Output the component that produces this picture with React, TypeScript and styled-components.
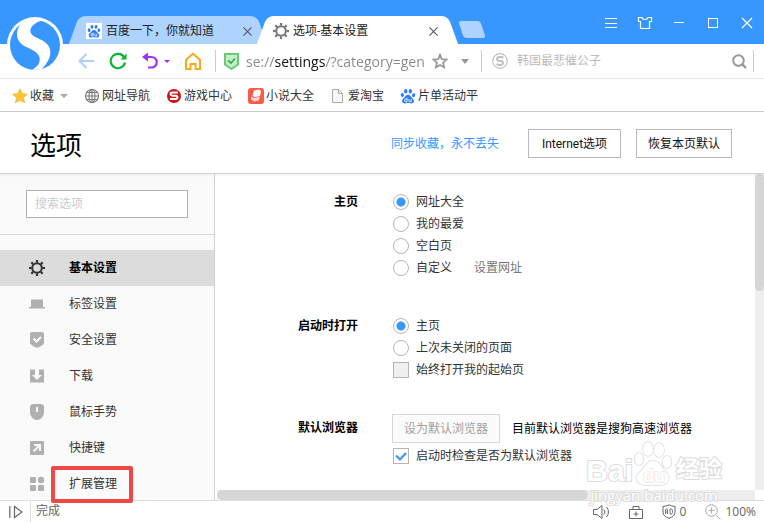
import React from "react";
import styled, { createGlobalStyle, css } from "styled-components";

const GlobalStyle = createGlobalStyle`
  *, *::before, *::after { box-sizing: border-box; }
  body {
    margin: 0;
    background: #fff;
    color: #333;
    font: 12px/22px Roboto, "Noto Sans CJK SC", sans-serif;
  }
  button, input { font: inherit; color: inherit; margin: 0; }
  button { padding: 0; border: 0; background: none; }
  a { color: inherit; text-decoration: none; }
  svg { display: block; flex: none; }
`;

const Window = styled.div`
  display: flex;
  flex-direction: column;
  height: 100vh;
  overflow: hidden;
`;

/* ---------- browser chrome ---------- */

const Chrome = styled.header`
  position: relative;
`;

const HomeLogo = styled.button`
  position: absolute;
  left: 7px;
  top: 17px;
  z-index: 2;
`;

const TitleBar = styled.div`
  display: flex;
  align-items: flex-end;
  height: 44px;
  padding-left: 74px;
  background: #3797ff;
`;

const Tab = styled.div<{ $active?: boolean }>`
  position: relative;
  z-index: ${(p) => (p.$active ? 1 : 0)};
  display: flex;
  align-items: center;
  flex: 0 1 ${(p) => (p.$active ? 191 : 188)}px;
  height: 28px;
  padding: 2px ${(p) => (p.$active ? 15 : 10)}px 0 ${(p) => (p.$active ? 11 : 12)}px;
  color: #222;

  &::before, &::after {
    content: "";
    position: absolute;
    z-index: -1;
    top: 0;
    bottom: 0;
    width: 60%;
    background: ${(p) => (p.$active ? "#fff" : "#aed3ff")};
  }
  &::before { left: 0; transform: skewX(-20deg); border-top-left-radius: 6px; }
  &::after { right: 0; transform: skewX(20deg); border-top-right-radius: 6px; }
`;

const TabStrip = styled.div`
  display: flex;
  flex: 1;
  isolation: isolate;
  & > div { isolation: isolate; }
`;

const TabTitle = styled.span`
  flex: 1;
  margin-left: 4px;
  white-space: nowrap;
`;

const NewTab = styled.button`
  width: 22px;
  height: 17px;
  margin: 5px 0 0 8px;
  background: #aed3ff;
  border-radius: 3px;
  transform: skewX(18deg);
`;

const WindowButtons = styled.div`
  display: flex;
  align-items: center;
  align-self: stretch;
  gap: 18px;
  padding: 2px 9px 0 0;
`;

const Toolbar = styled.div`
  display: flex;
  align-items: center;
  height: 35px;
  padding: 0 10px 0 78px;
  border-bottom: 1px solid #e3e3e3;
`;

const NavButtons = styled.div`
  display: flex;
  align-items: center;
  gap: 15px;
  margin-right: 14px;
`;

const UndoGroup = styled.div`
  display: flex;
  align-items: center;
  gap: 6px;
`;

const Divider = styled.span`
  width: 1px;
  height: 22px;
  background: #ccc;
`;

const AddressBox = styled.div`
  display: flex;
  align-items: center;
  flex: 1;
  gap: 7px;
  padding: 0 9px 0 8px;
`;

const AddressInput = styled.input`
  flex: 1;
  min-width: 0;
  height: 26px;
  padding: 0;
  border: 0;
  outline: 0;
  font-family: "Open Sans", sans-serif;
  font-size: 14px;
  color: transparent;
  background: linear-gradient(90deg, #888 28px, #111 28px, #111 80px, #888 80px);
  -webkit-background-clip: text;
  background-clip: text;
`;

const SearchBox = styled.div`
  display: flex;
  align-items: center;
  flex: none;
  width: 271px;
  gap: 9px;
  padding: 0 6px 0 10px;
`;

const PlainInput = styled.input`
  flex: 1;
  min-width: 0;
  padding: 0;
  border: 0;
  outline: 0;
  background: none;
  &::placeholder { color: #bbb; }
`;

const Bookmarks = styled.nav`
  display: flex;
  align-items: center;
  gap: 16px;
  height: 33px;
  padding: 1px 0 0 12px;
  border-bottom: 1px solid #ccc;
  white-space: nowrap;
`;

const Bookmark = styled.a`
  display: flex;
  align-items: center;
  gap: 2px;
`;

const BookmarkMenu = styled.button`
  display: flex;
  align-items: center;
  gap: 2px;
  & > svg:last-child { margin-left: 4px; }
`;

/* ---------- settings page ---------- */

const PageHeader = styled.div`
  display: flex;
  align-items: center;
  gap: 15px;
  height: 62px;
  padding: 2px 32px 0 30px;
  border-bottom: 1px solid #d3d3d3;
  box-shadow: 0 1px 3px #0000000f;
  z-index: 1;
`;

const PageTitle = styled.h1`
  flex: 1;
  margin: 0;
  padding-top: 4px;
  font-size: 26px;
  line-height: 40px;
  font-weight: 400;
  color: #000;
`;

const SyncLink = styled.a`
  margin-right: 14px;
  color: #3797ff;
`;

const BoxButton = styled.button<{ $muted?: boolean }>`
  height: 29px;
  padding: 0 ${(p) => (p.$muted ? 11 : 11)}px;
  border: 1px solid ${(p) => (p.$muted ? "#d8d8d8" : "#b9b9b9")};
  background: ${(p) => (p.$muted ? "#fbfbfb" : "#fff")};
  color: ${(p) => (p.$muted ? "#a0a0a0" : "#111")};
  line-height: 22px;
`;

const HeaderButton = styled(BoxButton)`
  min-width: 93px;
  &:last-child { min-width: 96px; }
`;

const Body = styled.div`
  display: flex;
  flex: 1;
  min-height: 0;
`;

const Sidebar = styled.aside`
  flex: none;
  width: 215px;
  background: #fafafa;
  border-right: 1px solid #d3d3d3;
`;

const SidebarSearch = styled.div`
  display: flex;
  padding: 16px 26px;
  border-bottom: 1px solid #d8d8d8;
`;

const SidebarInput = styled(PlainInput)`
  height: 28px;
  padding: 0 8px;
  border: 1px solid #b0b0b0;
  background: #fff;
  &::placeholder { color: #ccc; }
`;

const Menu = styled.nav`
  display: flex;
  flex-direction: column;
  padding-top: 15px;
`;

const MenuItem = styled.a<{ $active?: boolean }>`
  position: relative;
  display: flex;
  align-items: center;
  gap: 24px;
  height: 36px;
  padding-left: 29px;
  ${(p) => p.$active && css`
    background: #dcdcdc;
    color: #000;
    font-weight: 700;
  `}
`;

const Highlight = styled.span`
  position: absolute;
  z-index: 3;
  left: 51px;
  top: 0;
  width: 82px;
  height: 37px;
  border: 4px solid #f04747;
  border-radius: 2px;
`;

const Scroller = styled.div`
  flex: 1;
  min-width: 0;
  display: grid;
  grid-template-columns: 1fr 9px;
  grid-template-rows: 1fr 10px;
  padding-left: 2px;
`;

const Track = styled.div`
  background: #eee;
`;

const ThumbY = styled.div`
  height: 37%;
  background: #d6d6d6;
  border-radius: 5px;
`;

const ThumbX = styled.div`
  width: 69%;
  height: 100%;
  background: #d6d6d6;
  border-radius: 5px;
`;

const Content = styled.main`
  min-width: 0;
  min-height: 0;
  overflow: hidden;
  padding-top: 17px;
`;

const Section = styled.section<{ $gap?: number }>`
  display: grid;
  grid-template-columns: 141px 1fr;
  column-gap: 34px;
  margin-bottom: ${(p) => p.$gap ?? 0}px;
`;

const SectionTitle = styled.h2<{ $tall?: boolean }>`
  margin: 0;
  font-size: 12px;
  line-height: ${(p) => (p.$tall ? 29 : 22)}px;
  text-align: right;
  color: #000;
`;

const Line = styled.div`
  display: flex;
  align-items: center;
  gap: 22px;
`;

const ButtonLine = styled(Line)`
  gap: 12px;
  margin-bottom: 2px;
  color: #000;
  white-space: nowrap;
`;

const Choice = styled.label`
  display: flex;
  align-items: center;
  gap: 7px;
  padding-left: 1px;
`;

const Radio = styled.input.attrs({ type: "radio" })`
  appearance: none;
  width: 16px;
  height: 16px;
  border: 1px solid #b5b5b5;
  border-radius: 50%;
  background: #fff;
  &:checked {
    background: radial-gradient(circle, #3797ff 4px, #fff 5px);
  }
`;

const CheckWrap = styled.span`
  display: grid;
  & > * { grid-area: 1 / 1; }
  & > svg { pointer-events: none; }
`;

const Check = styled.input.attrs({ type: "checkbox" })`
  appearance: none;
  width: 16px;
  height: 16px;
  border: 1px solid #b5b5b5;
  background: #fff;
  &:disabled { background: #f0f0f0; }
`;

const SubLink = styled.a`
  color: #777;
`;

/* ---------- status bar ---------- */

const StatusBar = styled.footer`
  display: flex;
  align-items: center;
  flex: none;
  height: 22px;
  padding: 0 8px 0 9px;
  border-top: 1px solid #e0e0e0;
  background: #fff;
  color: #666;
`;

const StatusText = styled.span`
  flex: 1;
  align-self: stretch;
  margin-left: 7px;
  padding-left: 5px;
  border-left: 1px solid #e0e0e0;
  line-height: 20px;
`;

const StatusTools = styled.div`
  display: flex;
  align-items: center;
  gap: 19px;
`;

const StatusButton = styled.button`
  display: flex;
  align-items: center;
  gap: 4px;
  font-family: "Open Sans", sans-serif;
  line-height: 20px;
`;

const Watermark = styled.div`
  position: absolute;
  right: 42px;
  bottom: 18px;
  z-index: 4;
  display: flex;
  flex-direction: column;
  align-items: center;
  pointer-events: none;
  color: #fff;
  -webkit-text-stroke: 2px #dcdcdc;
  paint-order: stroke fill;
  font-family: "Liberation Sans", "Noto Sans CJK SC", sans-serif;
`;

const WatermarkBrand = styled.div`
  display: flex;
  align-items: flex-end;
  font-size: 30px;
  line-height: 32px;
  font-weight: 700;
`;

const WatermarkName = styled.span`
  margin-left: 3px;
  font-size: 23px;
  line-height: 36px;
`;

const WatermarkSite = styled.div`
  font-family: "Open Sans", sans-serif;
  font-size: 15px;
  line-height: 17px;
`;

/* ---------- drawings ---------- */

const SogouLogo = () => (
  <svg width="56" height="56" viewBox="9 15 168 168">
    <circle cx="93" cy="99" r="84" fill="#fff" />
    <circle cx="93" cy="99" r="75" fill="#3797ff" />
    <path
      fill="#fff"
      d="M121 24C98 28 78 42 79 58C80 74 104 78 121 89C140 101 143 122 135 140C129 153 121 163 111 173L84 173C99 167 109 153 107 139C104 121 86 115 69 106C50 97 38 84 39 65C40 45 53 31 71 22Z"
    />
  </svg>
);

const Paw = ({ size, color, hole }: { size: number; color: string; hole: string }) => (
  <svg width={size} height={size} viewBox="0 0 16 16">
    <g fill={color}>
      <ellipse cx="2.4" cy="7" rx="1.6" ry="2.1" transform="rotate(-12 2.4 7)" />
      <ellipse cx="5.7" cy="3.2" rx="1.6" ry="2.2" />
      <ellipse cx="10.3" cy="3.2" rx="1.6" ry="2.2" transform="rotate(8 10.3 3.2)" />
      <ellipse cx="13.6" cy="7.2" rx="1.6" ry="2" transform="rotate(12 13.6 7.2)" />
      <path d="M8 6.8c2 0 2.6 1.6 3.9 3 1.3 1.3 2.4 2.2 2 3.8-.4 1.5-1.700 1.900-3.100 1.800-1-.1-1.800-.3-2.800-.3s-1.800.2-2.800.3c-1.400.1-2.700-.3-3.100-1.800-.4-1.600.7-2.500 2-3.800C5.400 8.400 6 6.800 8 6.800Z" />
    </g>
    <path
      d="M7 9.700v4H5.800a1.300 1.300 0 0 1 0-2.600H7M9 11v2q0 .8.800.8h1.400V11"
      fill="none"
      stroke={hole}
      strokeWidth=".9"
    />
  </svg>
);

const Gear = ({ size, color }: { size: number; color: string }) => (
  <svg width={size} height={size} viewBox="0 0 16 16" fill="none" stroke={color}>
    <circle cx="8" cy="8" r="4.800" strokeWidth="2" />
    <g strokeWidth="2.200">
      {[0, 45, 90, 135, 180, 225, 270, 315].map((a) => (
        <path key={a} d="M8 0v2.600" transform={`rotate(${a} 8 8)`} />
      ))}
    </g>
  </svg>
);

const Cross = ({ size, color }: { size: number; color: string }) => (
  <svg width={size} height={size} viewBox="0 0 10 10" stroke={color} strokeWidth="1.200">
    <path d="M.5.5l9 9M9.500.5l-9 9" />
  </svg>
);

const Caret = ({ width, color }: { width: number; color: string }) => (
  <svg width={width} height={width > 6 ? 4 : 3} viewBox="0 0 8 4" preserveAspectRatio="none">
    <path d="M0 0h8L4 4Z" fill={color} />
  </svg>
);

const Magnifier = () => (
  <svg width="15" height="15" viewBox="0 0 15 15" fill="none" stroke="#999" strokeWidth="2">
    <circle cx="6.500" cy="6.500" r="5.300" />
    <path d="M10 10l4 4" strokeWidth="2.400" />
  </svg>
);

const menuIcons: Record<string, React.ReactNode> = {
  tab: <path d="M2 3.500h12V11h2v1.500H0V11h2Z" />,
  shield: (
    <>
      <path d="M1 1.500Q1 0 3 0h10q2 0 2 1.500V11q0 2-7 5Q1 13 1 11Z" />
      <path d="M4.500 6.500l3 3 4.500-4.500" fill="none" stroke="#fafafa" strokeWidth="2" />
    </>
  ),
  download: <path d="M1 1.500h5V7H3l5 5 5-5h-3V1.500h5v13H1Z" />,
  mouse: (
    <>
      <path d="M1 3Q1 0 5 0h6q4 0 4 3v5c0 4-3 8-7 8S1 12 1 8Z" />
      <path d="M8 3v5" stroke="#fafafa" strokeWidth="2" />
    </>
  ),
  shortcut: (
    <>
      <path d="M2 1h12q1 0 1 1v12q0 1-1 1H2q-1 0-1-1V2q0-1 1-1Z" />
      <path d="M5 5h6v6M11 5l-6.500 6.500" fill="none" stroke="#fafafa" strokeWidth="2" />
    </>
  ),
  apps: (
    <>
      <rect x="1" y="1" width="6" height="6" rx="1" />
      <circle cx="12" cy="4" r="3.200" />
      <rect x="1" y="9" width="6" height="6" rx="1" />
      <rect x="9" y="9" width="6" height="6" rx="1" />
    </>
  ),
};

const menu = [
  { label: "基本设置", icon: "gear", active: true },
  { label: "标签设置", icon: "tab" },
  { label: "安全设置", icon: "shield" },
  { label: "下载", icon: "download" },
  { label: "鼠标手势", icon: "mouse" },
  { label: "快捷键", icon: "shortcut" },
  { label: "扩展管理", icon: "apps", marked: true },
];

const bookmarks = [
  {
    label: "网址导航",
    icon: (
      <svg width="16" height="16" viewBox="0 0 16 16" fill="none" stroke="#777" strokeWidth="1.100">
        <circle cx="8" cy="8" r="6.500" />
        <ellipse cx="8" cy="8" rx="3" ry="6.500" />
        <path d="M8 1.500v13M1.500 8h13M2.500 4.500h11M2.500 11.500h11" />
      </svg>
    ),
  },
  {
    label: "游戏中心",
    icon: (
      <svg width="16" height="16" viewBox="0 0 16 16" fill="none">
        <circle cx="8" cy="8" r="7" fill="#c9151b" />
        <path d="M12 4.500H6.500Q4.500 4.500 4.500 6t2 1.700h3q2 0 2 1.600t-2 1.700H4" stroke="#fff" strokeWidth="1.900" />
      </svg>
    ),
  },
  {
    label: "小说大全",
    icon: (
      <svg width="16" height="16" viewBox="0 0 16 16">
        <rect width="16" height="16" rx="3" fill="#fb5a4b" />
        <path d="M6 2.500l5-1 2 1.500-1 5-5 1.200L4.500 8Z" fill="#fff" />
        <path d="M3 8.500l3 1.500 6-1.200-1.500 3.700-4 1L3 11.500Z" fill="#ffd9d4" />
      </svg>
    ),
  },
  {
    label: "爱淘宝",
    icon: (
      <svg width="16" height="16" viewBox="0 0 16 16" fill="#f8f8f8" stroke="#aaa">
        <path d="M2.500 1.500h6l4 4v9h-10ZM8.500 1.500v4h4" />
      </svg>
    ),
  },
  { label: "片单活动平", icon: <Paw size={16} color="#2a7df5" hole="#fff" /> },
];

export default function App() {
  return (
    <Window>
      <GlobalStyle />
      <Chrome>
        <HomeLogo aria-label="搜狗">
          <SogouLogo />
        </HomeLogo>
        <TitleBar>
          <TabStrip>
            <Tab>
              <svg width="16" height="16" viewBox="0 0 16 16">
                <rect width="16" height="16" fill="#fff" />
                <g transform="translate(1 1)">
                  <Paw size={14} color="#2a7df5" hole="#fff" />
                </g>
              </svg>
              <TabTitle>百度一下，你就知道</TabTitle>
              <button aria-label="关闭">
                <Cross size={9} color="#555" />
              </button>
            </Tab>
            <Tab $active>
              <Gear size={16} color="#777" />
              <TabTitle>选项-基本设置</TabTitle>
              <button aria-label="关闭">
                <Cross size={9} color="#555" />
              </button>
            </Tab>
            <NewTab aria-label="新标签" />
          </TabStrip>
          <WindowButtons>
            <button aria-label="菜单">
              <svg width="16" height="16" viewBox="0 0 16 16" stroke="#fff">
                <path d="M2 3.500h12M2 8.500h12M2 12.500h12" />
              </svg>
            </button>
            <button aria-label="皮肤">
              <svg width="16" height="16" viewBox="0 0 16 16" fill="none" stroke="#fff" strokeWidth="1.200">
                <path d="M1.500 2.500h3.500q.5 2 3 2t3-2h3.500v4h-2v7h-9v-7h-2Z" />
              </svg>
            </button>
            <button aria-label="最小化">
              <svg width="16" height="16" viewBox="0 0 16 16" stroke="#fff">
                <path d="M3 7.500h10" />
              </svg>
            </button>
            <button aria-label="最大化">
              <svg width="16" height="16" viewBox="0 0 16 16" fill="none" stroke="#fff">
                <rect x="3.500" y="3.500" width="9" height="9" />
              </svg>
            </button>
            <button aria-label="关闭窗口">
              <svg width="16" height="16" viewBox="0 0 16 16" stroke="#fff" strokeWidth="1.200">
                <path d="M3 3l10 10M13 3L3 13" />
              </svg>
            </button>
          </WindowButtons>
        </TitleBar>

        <Toolbar>
          <NavButtons>
            <button aria-label="后退">
              <svg width="16" height="16" viewBox="0 0 16 16" fill="none" stroke="#a9d0ff" strokeWidth="2">
                <path d="M16 8H2M8.500 1L1.500 8l7 7" />
              </svg>
            </button>
            <button aria-label="刷新">
              <svg width="18" height="18" viewBox="0 0 18 18" fill="none" stroke="#0fb532">
                <path d="M15.500 6A7.200 7.200 0 1 0 16 10.500" strokeWidth="2.200" />
                <path d="M17.500 1.500v6h-6Z" fill="#0fb532" stroke="none" />
              </svg>
            </button>
            <UndoGroup>
              <button aria-label="恢复">
                <svg width="16" height="18" viewBox="0 0 16 18" fill="none" stroke="#9b30ff" strokeWidth="2.200">
                  <path d="M3 5h6.500a5 5 0 0 1 0 10.500H6" />
                  <path d="M6 .5v9L0 5Z" fill="#9b30ff" stroke="none" />
                </svg>
              </button>
              <Caret width={6} color="#9b30ff" />
            </UndoGroup>
            <button aria-label="主页">
              <svg width="16" height="18" viewBox="0 0 16 18" fill="none" stroke="#fba919" strokeWidth="2">
                <path d="M1 8l7-6.500L15 8v9h-4.500v-5h-5v5H1Z" />
              </svg>
            </button>
          </NavButtons>
          <Divider />
          <AddressBox>
            <svg width="15" height="17" viewBox="0 0 15 17">
              <path d="M1 1h13v10.500L7.500 16 1 11.500Z" fill="#c4eec4" stroke="#6cc77a" strokeWidth="2" />
              <path d="M4 7.500L7 10l4-4.500" fill="none" stroke="#3fae55" strokeWidth="1.800" />
            </svg>
            <AddressInput aria-label="地址" defaultValue="se://settings/?category=general" />
            <button aria-label="收藏此页">
              <svg width="16" height="16" viewBox="0 0 16 16" fill="none" stroke="#999" strokeWidth="1.800">
                <path d="M8 1.800l1.900 4.300 4.600.5-3.400 3.100 1 4.600L8 12l-4.100 2.300 1-4.600L1.500 6.600l4.600-.5Z" />
              </svg>
            </button>
            <button aria-label="历史地址">
              <svg width="17" height="5" viewBox="0 0 17 5">
                <path d="M6 0h8l-4 5Z" fill="#999" />
              </svg>
            </button>
          </AddressBox>
          <Divider />
          <SearchBox>
            <svg width="16" height="16" viewBox="0 0 16 16" fill="none" stroke="#c0c0c0">
              <circle cx="8" cy="8" r="7.300" strokeWidth="1.200" />
              <path
                d="M11.500 4.500Q10 4 8 4 5 4 5 6t3 2 3 2-3 2Q6 12 4.500 11.200"
                strokeWidth="2"
              />
            </svg>
            <PlainInput aria-label="搜索" placeholder="韩国最悲催公子" />
            <button aria-label="开始搜索">
              <Magnifier />
            </button>
          </SearchBox>
          <Divider />
        </Toolbar>

        <Bookmarks>
          <BookmarkMenu>
            <svg width="16" height="16" viewBox="0 0 16 16">
              <path
                d="M8 .8l2.200 4.800 5.200.6-3.900 3.500 1.100 5.100L8 12.300l-4.600 2.500 1.100-5.100L.6 6.200l5.200-.6Z"
                fill="#fbc436"
                stroke="#f0b01f"
                strokeWidth=".6"
              />
            </svg>
            收藏
            <Caret width={8} color="#aaa" />
          </BookmarkMenu>
          {bookmarks.map((b) => (
            <Bookmark key={b.label} href="#">
              {b.icon}
              {b.label}
            </Bookmark>
          ))}
        </Bookmarks>
      </Chrome>

      <PageHeader>
        <PageTitle>选项</PageTitle>
        <SyncLink href="#">同步收藏，永不丢失</SyncLink>
        <HeaderButton>Internet选项</HeaderButton>
        <HeaderButton>恢复本页默认</HeaderButton>
      </PageHeader>

      <Body>
        <Sidebar>
          <SidebarSearch>
            <SidebarInput aria-label="搜索选项" placeholder="搜索选项" />
          </SidebarSearch>
          <Menu>
            {menu.map((m) => (
              <MenuItem key={m.label} href="#" $active={m.active}>
                {m.icon === "gear" ? (
                  <Gear size={16} color="#333" />
                ) : (
                  <svg width="16" height="16" viewBox="0 0 16 16" fill="#b0b0b0">
                    {menuIcons[m.icon]}
                  </svg>
                )}
                {m.label}
                {m.marked && <Highlight />}
              </MenuItem>
            ))}
          </Menu>
        </Sidebar>

        <Scroller>
          <Content>
            <Section $gap={36}>
              <SectionTitle>主页</SectionTitle>
              <div>
                <Choice><Radio name="home" defaultChecked />网址大全</Choice>
                <Choice><Radio name="home" />我的最爱</Choice>
                <Choice><Radio name="home" />空白页</Choice>
                <Line>
                  <Choice><Radio name="home" />自定义</Choice>
                  <SubLink href="#">设置网址</SubLink>
                </Line>
              </div>
            </Section>
            <Section $gap={33}>
              <SectionTitle>启动时打开</SectionTitle>
              <div>
                <Choice><Radio name="start" defaultChecked />主页</Choice>
                <Choice><Radio name="start" />上次未关闭的页面</Choice>
                <Choice><Check disabled />始终打开我的起始页</Choice>
              </div>
            </Section>
            <Section>
              <SectionTitle $tall>默认浏览器</SectionTitle>
              <div>
                <ButtonLine>
                  <BoxButton $muted disabled>设为默认浏览器</BoxButton>
                  目前默认浏览器是搜狗高速浏览器
                </ButtonLine>
                <Choice>
                  <CheckWrap>
                    <Check defaultChecked />
                    <svg width="16" height="16" viewBox="0 0 16 16" fill="none" stroke="#3797ff" strokeWidth="2.200">
                      <path d="M3 7.500l4 4L13 5" />
                    </svg>
                  </CheckWrap>
                  启动时检查是否为默认浏览器
                </Choice>
              </div>
            </Section>
          </Content>
          <Track><ThumbY /></Track>
          <Track><ThumbX /></Track>
        </Scroller>
      </Body>

      <StatusBar>
        <button aria-label="展开侧栏">
          <svg width="14" height="14" viewBox="0 0 14 14" fill="none" stroke="#666" strokeWidth="1.200">
            <path d="M.8 1v12M5.500 1.500v11L13 7Z" />
          </svg>
        </button>
        <StatusText>完成</StatusText>
        <StatusTools>
          <StatusButton aria-label="声音">
            <svg width="17" height="14" viewBox="0 0 17 14" fill="none" stroke="#666">
              <path d="M.5 4.500h3.500l5-4v13l-5-4H.5ZM11 4.500q2 2.500 0 5M13.500 2q4 5 0 10" />
            </svg>
          </StatusButton>
          <StatusButton aria-label="修复">
            <svg width="14" height="14" viewBox="0 0 14 14" fill="none" stroke="#666">
              <path d="M.5 4.500h13v9H.5ZM4 4.500v-3h6v3M7 6.500v5M4.500 9h5" />
            </svg>
          </StatusButton>
          <StatusButton aria-label="广告拦截 0">
            <svg width="14" height="15" viewBox="0 0 14 15" fill="none" stroke="#666">
              <path d="M1 2.500Q5 2 7 .8 9 2 13 2.500V8q0 4.500-6 6.300Q1 12.500 1 8Z" />
              <path d="M3.500 10V6q0-1 1-1t1 1v4M3.500 8h2M8 5v5h.8q1.700 0 1.700-1.500v-2Q10.500 5 8.800 5Z" strokeWidth=".9" />
            </svg>
            0
          </StatusButton>
          <StatusButton aria-label="缩放 100%">
            <svg width="16" height="16" viewBox="0 0 16 16" fill="none" stroke="#aaa">
              <circle cx="6.500" cy="6.500" r="5.800" />
              <path d="M6.500 3.500v6M3.500 6.500h6M10.800 10.800l4.500 4.500" />
            </svg>
            100%
          </StatusButton>
        </StatusTools>
      </StatusBar>

      <Watermark>
        <WatermarkBrand>
          <span>Bai</span>
          <svg width="40" height="46" viewBox="0 0 38 46" fill="#fff" stroke="#dcdcdc" strokeWidth="1.500">
            <ellipse cx="5" cy="18" rx="4.500" ry="6" />
            <ellipse cx="14" cy="8" rx="5" ry="7" />
            <ellipse cx="25" cy="9" rx="5" ry="7" />
            <ellipse cx="33" cy="21" rx="4.500" ry="6" />
            <path d="M19 20c6 0 8 5 11 9 4 4 6 6 4 11-2 4-6 4-10 4H13c-5 0-9-1-10-5-1-5 2-7 5-10 3-4 5-9 11-9Z" />
            <text x="9" y="41" fontSize="18" fontWeight="700" strokeWidth="1">du</text>
          </svg>
          <WatermarkName>经验</WatermarkName>
        </WatermarkBrand>
        <WatermarkSite>jingyan.baidu.com</WatermarkSite>
      </Watermark>
    </Window>
  );
}
